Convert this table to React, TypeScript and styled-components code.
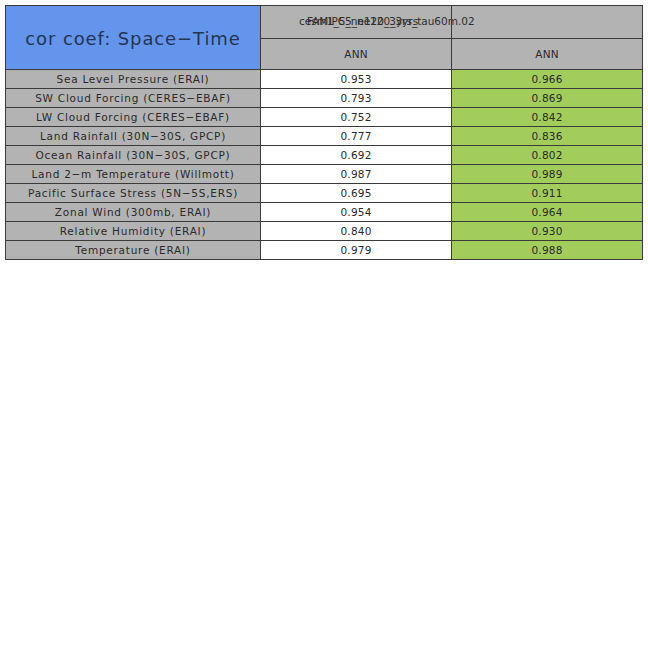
import React from "react";
import styled, { createGlobalStyle } from "styled-components";

const Global = createGlobalStyle`
  html, body { margin: 0; padding: 0; background: #ffffff; }
  body { font-family: "DejaVu Sans", "Liberation Sans", sans-serif; }
`;

const Page = styled.div`
  padding: 5px 0 0 5px;
`;

const Grid = styled.div`
  display: grid;
  width: 636px;
  grid-template-columns: 254px 190px 190px;
  grid-template-rows: 32px 30px repeat(10, 18px);
  gap: 1px;
  padding: 1px;
  background: #3a3a3a;
  color: #222;
`;

const Cell = styled.div<{ $bg?: string }>`
  background: ${(p) => p.$bg ?? "#ffffff"};
  display: flex;
  align-items: center;
  justify-content: center;
  font-size: 10.5px;
  letter-spacing: 0.2px;
  white-space: nowrap;
  color: #2a2a2a;
`;

const Label = styled(Cell)`
  background: #b3b3b3;
  letter-spacing: 0.75px;
`;

const Corner = styled(Cell)`
  grid-column: 1;
  grid-row: 1 / 3;
  background: #6495ed;
  font-size: 18px;
  letter-spacing: 0.9px;
  color: #253450;
  padding-top: 2px;
`;

const Title = styled.div`
  grid-column: 2 / 4;
  grid-row: 1;
  display: grid;
  align-items: center;
  font-size: 10.5px;
  color: #2e2e2e;
  white-space: nowrap;
  padding-bottom: 3px;
`;

const TitleText = styled.span<{ $indent: number }>`
  grid-area: 1 / 1;
  padding-left: ${(p) => p.$indent}px;
`;

const GRAY = "#b3b3b3";
const GREEN = "#a2cd5a";

const rows: [string, string, string][] = [
  ["Sea Level Pressure (ERAI)", "0.953", "0.966"],
  ["SW Cloud Forcing (CERES\u2212EBAF)", "0.793", "0.869"],
  ["LW Cloud Forcing (CERES\u2212EBAF)", "0.752", "0.842"],
  ["Land Rainfall (30N\u221230S, GPCP)", "0.777", "0.836"],
  ["Ocean Rainfall (30N\u221230S, GPCP)", "0.692", "0.802"],
  ["Land 2\u2212m Temperature (Willmott)", "0.987", "0.989"],
  ["Pacific Surface Stress (5N\u22125S,ERS)", "0.695", "0.911"],
  ["Zonal Wind (300mb, ERAI)", "0.954", "0.964"],
  ["Relative Humidity (ERAI)", "0.840", "0.930"],
  ["Temperature (ERAI)", "0.979", "0.988"],
];

export default function App() {
  return (
    <>
      <Global />
      <Page>
        <Grid>
          <Corner>cor coef: Space{"\u2212"}Time</Corner>
          <Cell $bg={GRAY} style={{ gridColumn: 2, gridRow: 1 }} />
          <Cell $bg={GRAY} style={{ gridColumn: 3, gridRow: 1 }} />
          <Title>
            <TitleText $indent={38}>cesm1_5_ne120_3yrs_tau60m.02</TitleText>
            <TitleText $indent={46}>FAMIPC5_ne120_3yrs</TitleText>
          </Title>
          <Cell $bg={GRAY}>ANN</Cell>
          <Cell $bg={GRAY}>ANN</Cell>
          {rows.map(([label, a, b]) => (
            <React.Fragment key={label}>
              <Label>{label}</Label>
              <Cell>{a}</Cell>
              <Cell $bg={GREEN}>{b}</Cell>
            </React.Fragment>
          ))}
        </Grid>
      </Page>
    </>
  );
}
